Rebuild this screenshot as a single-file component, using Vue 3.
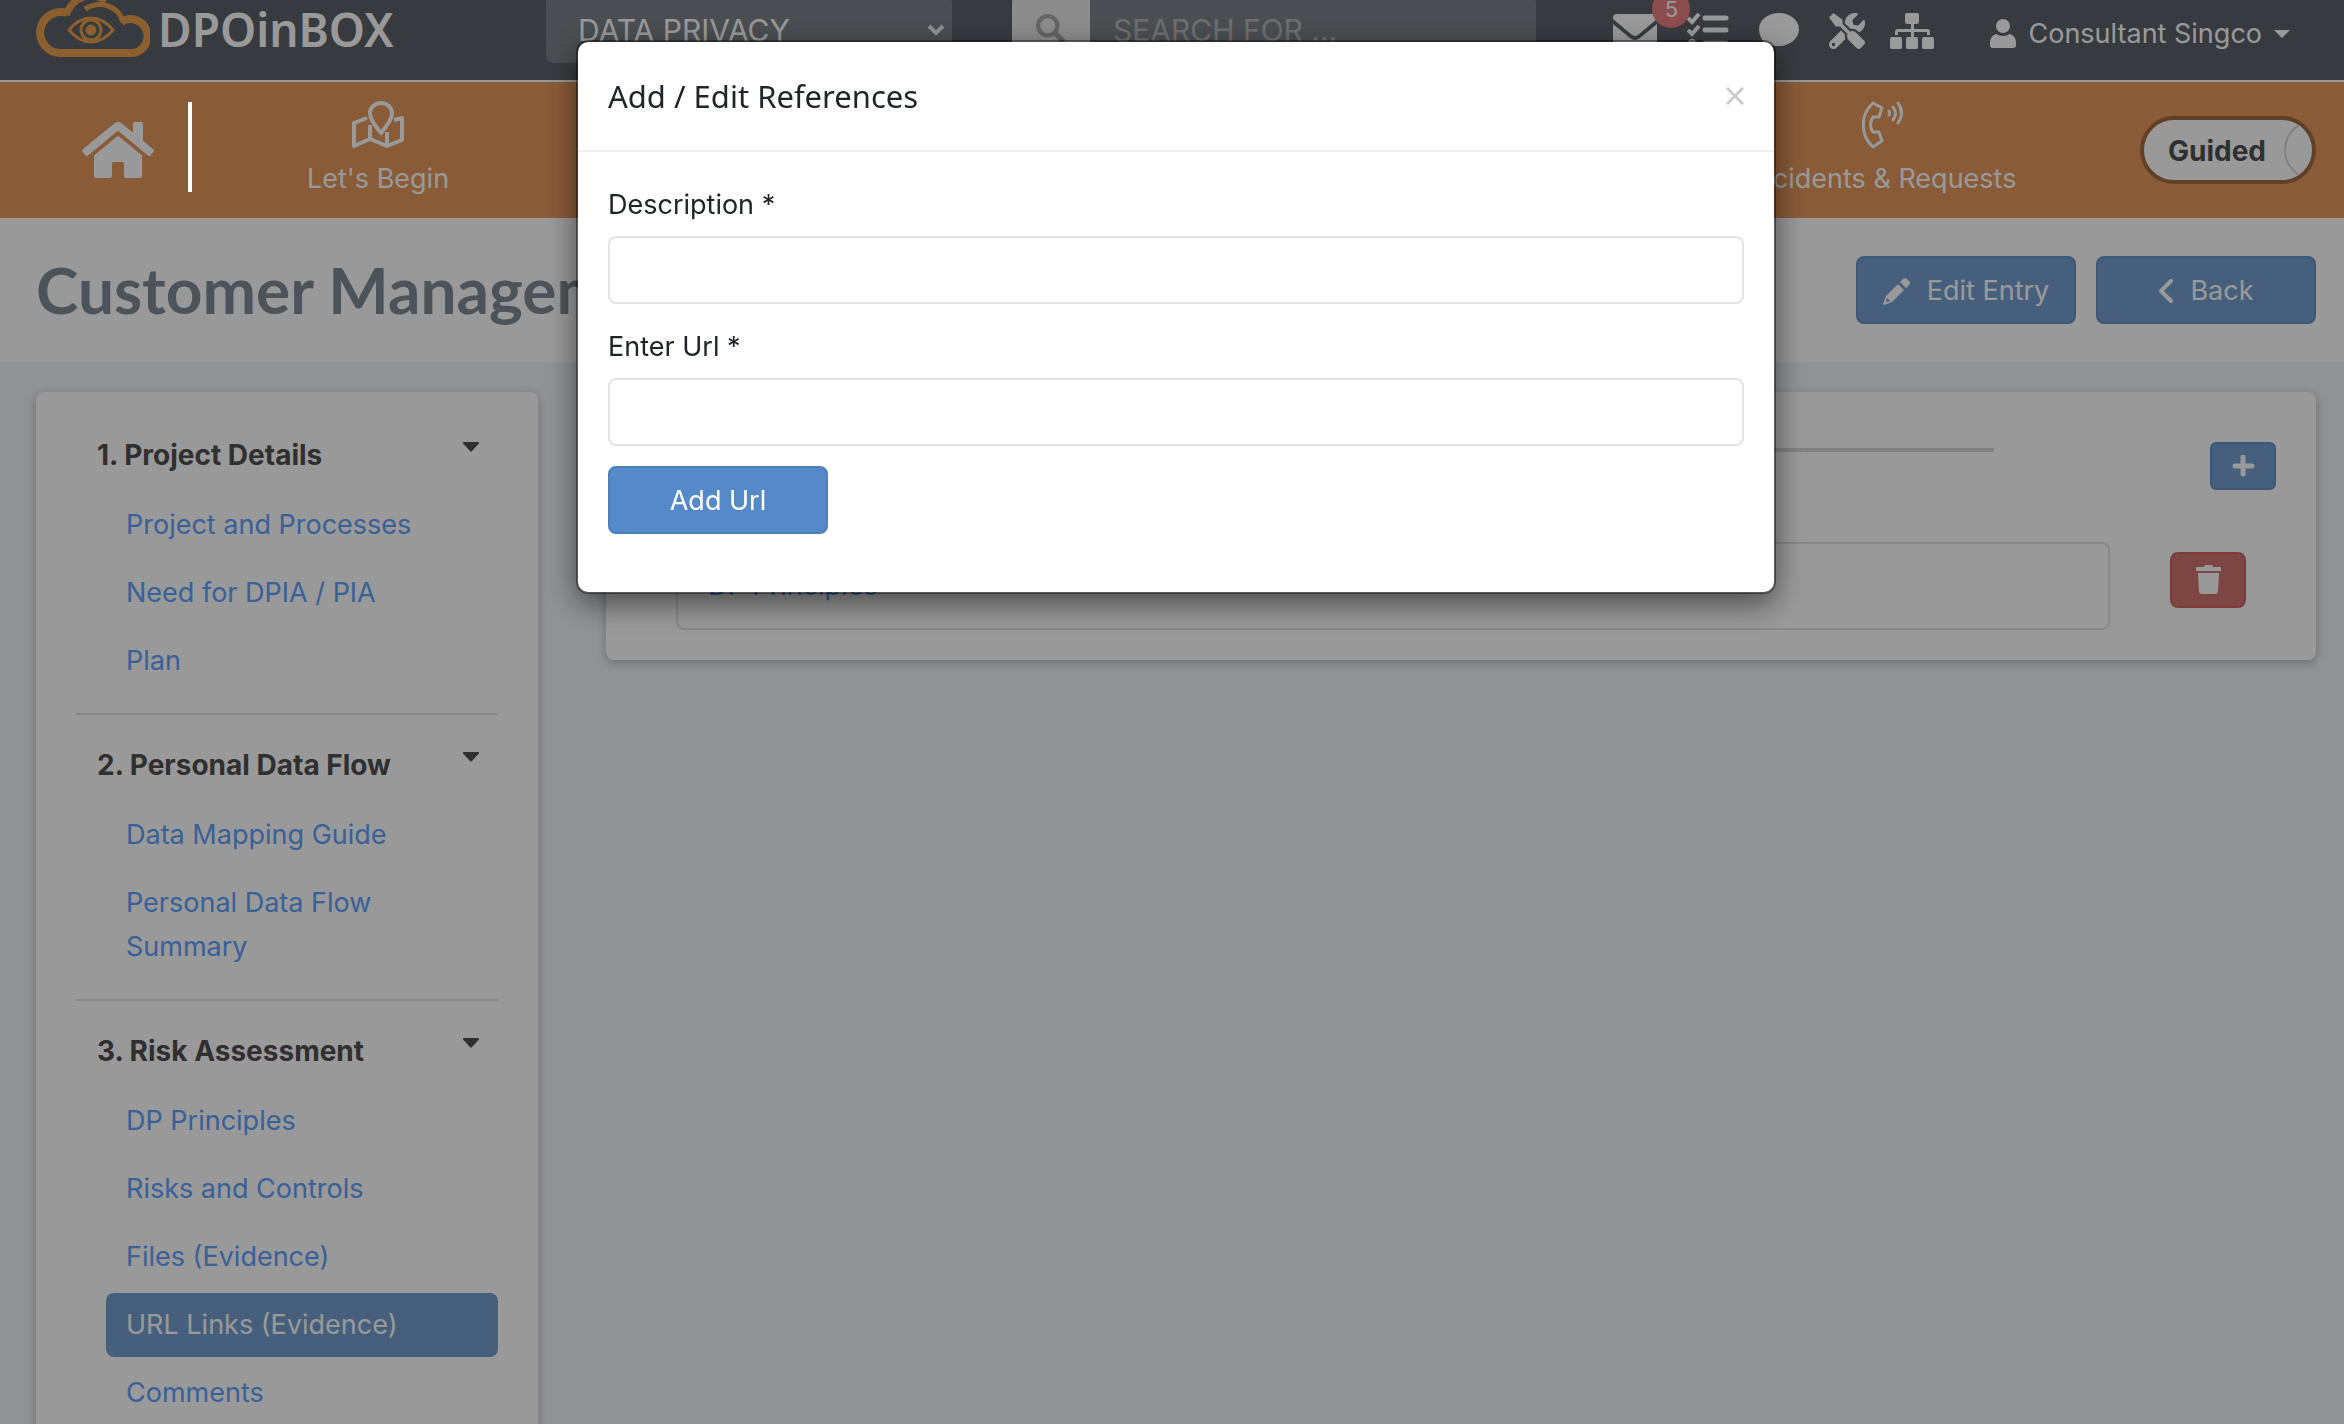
<script setup>
import { ref } from 'vue'

const workspace = ref('DATA PRIVACY')
const search = ref('')
const description = ref('')
const url = ref('')

const sections = [
  { title: '1. Project Details', items: ['Project and Processes', 'Need for DPIA / PIA', 'Plan'] },
  { title: '2. Personal Data Flow', items: ['Data Mapping Guide', 'Personal Data Flow Summary'] },
  {
    title: '3. Risk Assessment',
    items: ['DP Principles', 'Risks and Controls', 'Files (Evidence)', 'URL Links (Evidence)', 'Comments'],
  },
]
const active = 'URL Links (Evidence)'
</script>

<template>
  <div class="page">
    <header class="topbar">
      <a href="#" class="brand">
        <svg class="cloud" viewBox="0 0 114 62" fill="none" stroke="#e8a04e">
          <path stroke-width="8" d="M93 55H24A20.500 20.500 0 1 1 31 15" />
          <path stroke-width="7" d="M30 17C37-2 56-7 70 3" />
          <path stroke-width="5" d="M49 11C64 2 82 7 87 24" />
          <path stroke-width="8" d="M85 24A17 17 0 1 1 93 55" />
          <path stroke-width="3" d="M33 32C46 16 64 16 77 32 64 48 46 48 33 32z" />
          <circle cx="55" cy="32" r="10" stroke-width="3" />
          <circle cx="55" cy="32" r="5" fill="#e8a04e" />
        </svg>
        <span>DPOinBOX</span>
      </a>
      <div class="workspace">
        <select v-model="workspace" aria-label="Workspace">
          <option>DATA PRIVACY</option>
        </select>
        <svg viewBox="0 0 18 12" fill="none" stroke="#f2f2f2" stroke-width="4"><path d="M2 2l7 7 7-7" /></svg>
      </div>
      <form class="search" @submit.prevent>
        <button type="submit" aria-label="Search">
          <svg viewBox="0 0 28 28" fill="none" stroke="#a8a8a8" stroke-width="4"><circle cx="11" cy="11" r="9" /><path stroke-width="5" d="M18 18l8 8" /></svg>
        </button>
        <input v-model="search" type="text" placeholder="SEARCH FOR ..." aria-label="Search for" />
      </form>
      <nav class="tools" aria-label="Tools">
        <a href="#" aria-label="Messages" class="mail">
          <svg width="44" height="34" viewBox="0 0 44 34" fill="#fff"><path d="M4 0h36q4 0 4 4v1L25 21q-3 2-6 0L0 5V4q0-4 4-4zM0 10l17 14q5 4 10 0l17-14v20q0 4-4 4H4q-4 0-4-4z" /></svg>
          <span class="badge">5</span>
        </a>
        <a href="#" aria-label="Tasks">
          <svg width="42" height="36" viewBox="0 0 42 36" fill="none" stroke="#fff"><path stroke-width="4" d="M1 5l4 4 7-8M1 17l4 4 7-8" /><path stroke-width="5" stroke-linecap="round" d="M18 5h21M18 17h21M18 30h21" /><circle cx="5" cy="30" r="4" fill="#fff" stroke="none" /></svg>
        </a>
        <a href="#" aria-label="Chat">
          <svg width="40" height="36" viewBox="0 0 40 36" fill="#fff"><path d="M20 0c11 0 20 7 20 16s-9 17-20 17c-3 0-6 0-9-1-3 2-6 3-10 3 2-2 3-4 4-6-3-3-5-8-5-13C0 7 9 0 20 0z" /></svg>
        </a>
        <a href="#" aria-label="Settings">
          <svg width="36" height="36" viewBox="0 0 512 512" fill="#fff"><path d="M501.1 395.7L384 278.6c-23.1-23.1-57.6-27.6-85.4-13.9L192 158.1V96L64 0 0 64l96 128h62.1l106.6 106.6c-13.6 27.8-9.2 62.3 13.9 85.4l117.1 117.1c14.6 14.6 38.2 14.6 52.7 0l52.7-52.7c14.5-14.6 14.5-38.2 0-52.7zM331.7 225c28.3 0 54.9 11 74.9 31l19.4 19.4c15.8-6.9 30.8-16.5 43.8-29.5 37.1-37.1 49.7-89.3 37.9-136.7-2.2-9-13.5-12.1-20.1-5.5l-74.4 74.4-67.9-11.3L334 98.9l74.4-74.4c6.6-6.6 3.4-17.9-5.7-20.2-47.4-11.7-99.6.9-136.6 37.9-28.5 28.5-41.9 66.1-41.2 103.6l82.1 82.1c8.1-1.9 16.5-2.9 24.7-2.9zm-103.9 82l-56.7-56.7L18.700 402.800c-25 25-25 65.500 0 90.500s65.500 25 90.500 0l123.600-123.600c-7.600-19.900-9.900-41.600-5-62.700zM64 472c-13.200 0-24-10.800-24-24 0-13.300 10.700-24 24-24s24 10.700 24 24c0 13.200-10.700 24-24 24z" /></svg>
        </a>
        <a href="#" aria-label="Organisation">
          <svg width="44" height="36" viewBox="0 0 44 36" fill="#fff"><rect x="15" width="14" height="11" rx="2" /><rect y="24" width="12" height="12" rx="2" /><rect x="16" y="24" width="12" height="12" rx="2" /><rect x="32" y="24" width="12" height="12" rx="2" /><path d="M21 10h3v6h13q3 0 3 3v3h-3v-3H24v5h-3v-5H8v3H5v-3q0-3 3-3h13z" /></svg>
        </a>
      </nav>
      <button type="button" class="account">
        <svg width="26" height="30" viewBox="0 0 26 30" fill="#fff"><ellipse cx="13" cy="7" rx="7" ry="7" /><path d="M6 15q7 4 14 0 6 2 6 9v2q0 3-3 3H3q-3 0-3-3v-2q0-7 6-9z" /></svg>
        <span>Consultant Singco</span>
        <svg width="16" height="8" viewBox="0 0 16 8" fill="#fff"><path d="M0 0h16l-8 8z" /></svg>
      </button>
    </header>

    <nav class="mainnav" aria-label="Main">
      <a href="#" class="home" aria-label="Home">
        <svg width="72" height="64" viewBox="0 0 576 512" fill="#fff"><path d="M280.370 148.260L96 300.110V464a16 16 0 0 0 16 16l112.060-.29a16 16 0 0 0 15.920-16V368a16 16 0 0 1 16-16h64a16 16 0 0 1 16 16v95.640a16 16 0 0 0 16 16.050L464 480a16 16 0 0 0 16-16V300L295.670 148.260a12.190 12.190 0 0 0-15.300 0zM571.600 251.470L488 182.560V44.050a12 12 0 0 0-12-12h-56a12 12 0 0 0-12 12v72.610L318.470 43a48 48 0 0 0-61 0L4.340 251.470a12 12 0 0 0-1.600 16.900l25.500 31A12 12 0 0 0 45.150 301l235.220-193.740a12.190 12.190 0 0 1 15.300 0L530.900 301a12 12 0 0 0 16.900-1.600l25.500-31a12 12 0 0 0-1.700-16.930z" /></svg>
      </a>
      <span class="divider"></span>
      <a href="#" class="navitem">
        <svg width="52" height="48" viewBox="0 0 52 48" fill="none" stroke="#fff" stroke-width="4" stroke-linejoin="round"><path d="M15 17L2 22v23l16-7 17 7 15-6V17l-8 2M18 24v14M35 31v14" /><path d="M29 32C22 23 18 18 18 12a11 10 0 0 1 22 0c0 6-4 11-11 20z" /></svg>
        <span>Let's Begin</span>
      </a>
      <a href="#" class="navitem last">
        <svg width="42" height="48" viewBox="0 0 42 48" fill="none" stroke="#fff" stroke-width="3" stroke-linejoin="round" stroke-linecap="round"><path d="M11 2l9 5-3 9h-6q-5 8 0 15h6l3 9-9 6C-2 34-2 14 11 2z" /><path d="M27 10q1 2 0 4M31 6q5 7 0 13M36 2q7 10 0 20" /></svg>
        <span>Incidents &amp; Requests</span>
      </a>
      <button type="button" class="mode" role="switch" aria-checked="true">
        <span>Guided</span><i></i>
      </button>
    </nav>

    <section class="titlebar">
      <h1>Customer Management</h1>
      <button type="button" class="btn">
        <svg width="28" height="28" viewBox="0 0 28 28" fill="#fff"><path d="M20 2q2-2 4 0l2 2q2 2 0 4l-3 3-6-6zM15 7l6 6L9 25l-8 3q-1 0-1-1l3-8zM4 21l-1 4 4-1z" fill-rule="evenodd" /></svg>
        <span>Edit Entry</span>
      </button>
      <button type="button" class="btn">
        <svg width="16" height="24" viewBox="0 0 16 24" fill="none" stroke="#fff" stroke-width="4" stroke-linecap="round" stroke-linejoin="round"><path d="M13 2L3 12l10 10" /></svg>
        <span>Back</span>
      </button>
    </section>

    <div class="content">
      <aside class="card sidebar">
        <section v-for="section in sections" :key="section.title">
          <h2>
            {{ section.title }}
            <svg width="16" height="10" viewBox="0 0 16 10" fill="#505050"><path d="M1 0h14q2 0 .5 2L9 9q-1 1-2 0L.5 2Q-1 0 1 0z" /></svg>
          </h2>
          <a v-for="item in section.items" :key="item" href="#" :class="{ active: item === active }">{{ item }}</a>
        </section>
      </aside>

      <main class="card references">
        <div class="bar">
          <span class="rule"></span>
          <button type="button" class="add" aria-label="Add reference">
            <svg width="23" height="23" viewBox="0 0 23 23" stroke="#fff" stroke-width="5" stroke-linecap="round"><path d="M11 2v17M3 11h17" /></svg>
          </button>
        </div>
        <div class="row">
          <div class="entry"><a href="#">DP Principles</a></div>
          <button type="button" class="delete" aria-label="Delete reference">
            <svg width="25" height="30" viewBox="0 0 25 30" fill="#fff"><path d="M1 2h7q0-2 2-2h5q2 0 2 2h7q1 0 1 1v3H0V3q0-1 1-1zM2 8h21l-1 18q0 3-3 3H6q-3 0-3-3z" /></svg>
          </button>
        </div>
      </main>
    </div>

    <div class="backdrop">
      <div class="modal" role="dialog" aria-modal="true" aria-labelledby="modal-title">
        <div class="modal-head">
          <h3 id="modal-title">Add / Edit References</h3>
          <button type="button" class="close" aria-label="Close">
            <svg width="18" height="18" viewBox="0 0 18 18" stroke="#ccc" stroke-width="3"><path d="M1 1l16 16M17 1L1 17" /></svg>
          </button>
        </div>
        <form class="modal-body" @submit.prevent>
          <label for="description">Description *</label>
          <input id="description" v-model="description" type="text" />
          <label for="url">Enter Url *</label>
          <input id="url" v-model="url" type="text" />
          <button type="submit" class="submit">Add Url</button>
        </form>
      </div>
    </div>
  </div>
</template>

<style>
body {
  background: #f0f3f7;
}
</style>

<style scoped>
* {
  box-sizing: border-box;
}
.page {
  height: 100vh;
  overflow: hidden;
  background: #f0f3f7;
  color: #505050;
  font: 27px/44px Inter, sans-serif;
}
a {
  color: #61a0fd;
  text-decoration: none;
}
button,
input,
select {
  font: inherit;
  margin: 0;
}
svg {
  flex: none;
  display: block;
}
.topbar {
  display: flex;
  align-items: center;
  height: 102px;
  margin-top: -20px;
  padding: 0 54px 2px 36px;
  background: #5d6269;
  border-bottom: 2px solid #fff;
}
.brand {
  display: flex;
  align-items: center;
  gap: 8px;
  width: 510px;
  color: #fff;
  font: 600 46px/60px "Noto Sans", sans-serif;
}
.cloud {
  width: 114px;
  height: 62px;
}
.workspace {
  position: relative;
  width: 406px;
  margin-right: 60px;
}
.workspace select {
  width: 100%;
  height: 68px;
  padding: 2px 32px 0;
  border: 0;
  border-radius: 8px;
  background: #7d8389;
  color: #fff;
  font-size: 30px;
  appearance: none;
}
.workspace svg {
  position: absolute;
  right: 7px;
  top: 29px;
  width: 18px;
  height: 12px;
}
.search {
  display: flex;
  width: 524px;
  height: 68px;
  border-radius: 8px;
  overflow: hidden;
  background: #7d8389;
}
.search button {
  width: 78px;
  padding: 0 24px;
  border: 0;
  background: #e9e9e9;
}
.search input {
  flex: 1;
  min-width: 0;
  padding: 2px 23px 0;
  border: 0;
  background: none;
  font-size: 30px;
}
.search input::placeholder {
  color: #b9b9b9;
  opacity: 1;
}
.tools {
  display: flex;
  align-items: center;
  gap: 30px;
  margin-left: auto;
  padding-top: 3px;
}
.tools a:last-child {
  margin-left: -5px;
}
.mail {
  position: relative;
}
.badge {
  position: absolute;
  left: 39px;
  top: -24px;
  display: flex;
  align-items: center;
  justify-content: center;
  width: 38px;
  height: 38px;
  border-radius: 50%;
  background: #ec7f82;
  color: #fff;
  font-size: 22px;
  line-height: 20px;
}
.account {
  display: flex;
  align-items: center;
  gap: 12px;
  margin-left: 56px;
  padding: 10px 0 0;
  border: 0;
  background: none;
  color: #fff;
}
.mainnav {
  display: flex;
  align-items: center;
  height: 136px;
  padding: 0 28px 0 82px;
  background: #e6985d;
  color: #fff;
}
.divider {
  position: relative;
  z-index: 3;
  width: 4px;
  height: 90px;
  margin: 0 74px 6px 34px;
  background: #fff;
}
.navitem {
  display: flex;
  flex-direction: column;
  align-items: center;
  gap: 8px;
  width: 224px;
  padding-top: 2px;
  color: #fff;
  white-space: nowrap;
}
.navitem.last {
  margin-left: auto;
  margin-right: 145px;
}
.mode {
  display: flex;
  align-items: center;
  width: 176px;
  height: 68px;
  padding: 0 0 0 24px;
  border: 4px solid #a26c44;
  border-radius: 34px;
  overflow: hidden;
  background: #fff;
  color: #505050;
  font-size: 28px;
  font-weight: 700;
}
.mode span {
  padding-top: 2px;
}
.mode i {
  flex: none;
  width: 60px;
  height: 60px;
  margin-left: 18px;
  border: 2px solid #d8d8d8;
  border-radius: 50%;
}
.titlebar {
  display: flex;
  align-items: center;
  gap: 20px;
  height: 144px;
  padding: 0 28px 0 36px;
  background: #fff;
}
h1 {
  flex: 1;
  margin: 0;
  color: #808c94;
  font: 700 64px/80px Lato, sans-serif;
}
.btn {
  display: flex;
  align-items: center;
  justify-content: center;
  gap: 16px;
  width: 220px;
  height: 68px;
  padding: 2px 0 0;
  border: 2px solid #6694cc;
  border-radius: 8px;
  background: #739ed0;
  color: #fff;
}
.content {
  display: flex;
  align-items: flex-start;
  gap: 68px;
  padding: 30px 28px 0 36px;
}
.card {
  border-radius: 8px;
  background: #fff;
  box-shadow: 0 3px 10px rgba(0, 0, 0, 0.25);
}
.sidebar {
  width: 502px;
  padding: 41px 40px 60px;
}
.sidebar section + section {
  margin-top: 20px;
  padding-top: 28px;
  border-top: 2px solid #e3e3e3;
}
h2 {
  display: flex;
  justify-content: space-between;
  margin: 0 19px 16px 21px;
  font: inherit;
  font-size: 28px;
  font-weight: 700;
}
h2 svg {
  margin-top: 9px;
}
.sidebar a {
  display: block;
  margin: 0 0 4px 30px;
  padding: 10px 20px;
  border-radius: 8px;
}
.sidebar a.active {
  background: #739ed0;
  color: #fff;
}
.references {
  flex: 1;
  padding: 50px 40px 30px 70px;
}
.bar {
  display: flex;
  align-items: flex-start;
}
.rule {
  flex: 1;
  height: 4px;
  margin: 6px 216px 0 0;
  background: #d8d8d8;
}
.add {
  display: grid;
  place-items: center;
  width: 66px;
  height: 48px;
  border: 2px solid #6694cc;
  border-radius: 6px;
  background: #739ed0;
}
.row {
  display: flex;
  gap: 60px;
  margin-top: 52px;
  padding-right: 30px;
}
.entry {
  flex: 1;
  height: 88px;
  padding: 20px 30px;
  border: 2px solid #e3e3e3;
  border-radius: 8px;
}
.delete {
  display: grid;
  place-items: center;
  width: 76px;
  height: 56px;
  margin-top: 10px;
  border: 2px solid #d0655f;
  border-radius: 8px;
  background: #d0766e;
}
.backdrop {
  position: fixed;
  inset: 0;
  z-index: 2;
  padding: 40px 0 0 8px;
  background: rgba(0, 0, 0, 0.4);
}
.modal {
  width: 1200px;
  margin: 0 auto;
  border: 2px solid rgba(0, 0, 0, 0.4);
  border-radius: 12px;
  background: #fff;
  background-clip: padding-box;
  box-shadow: 0 10px 30px rgba(0, 0, 0, 0.5);
  color: #212529;
}
.modal-head {
  display: flex;
  justify-content: space-between;
  align-items: center;
  height: 110px;
  padding: 0 30px;
  border-bottom: 2px solid #efefef;
}
h3 {
  margin: 0;
  font: 400 31px/48px "Noto Sans", sans-serif;
}
.close {
  padding: 0;
  border: 0;
  background: none;
}
.modal-body {
  padding: 30px 30px 58px;
}
.modal-body label {
  display: block;
  padding-top: 1px;
  margin-bottom: 9px;
}
.modal-body input {
  display: block;
  width: 100%;
  height: 68px;
  margin-bottom: 20px;
  padding: 0 20px;
  border: 2px solid #e4e4e4;
  border-radius: 8px;
}
.submit {
  display: block;
  width: 220px;
  height: 68px;
  padding: 2px 0 0;
  border: 2px solid #4a7fc0;
  border-radius: 8px;
  background: #5589c7;
  color: #fff;
}
</style>
